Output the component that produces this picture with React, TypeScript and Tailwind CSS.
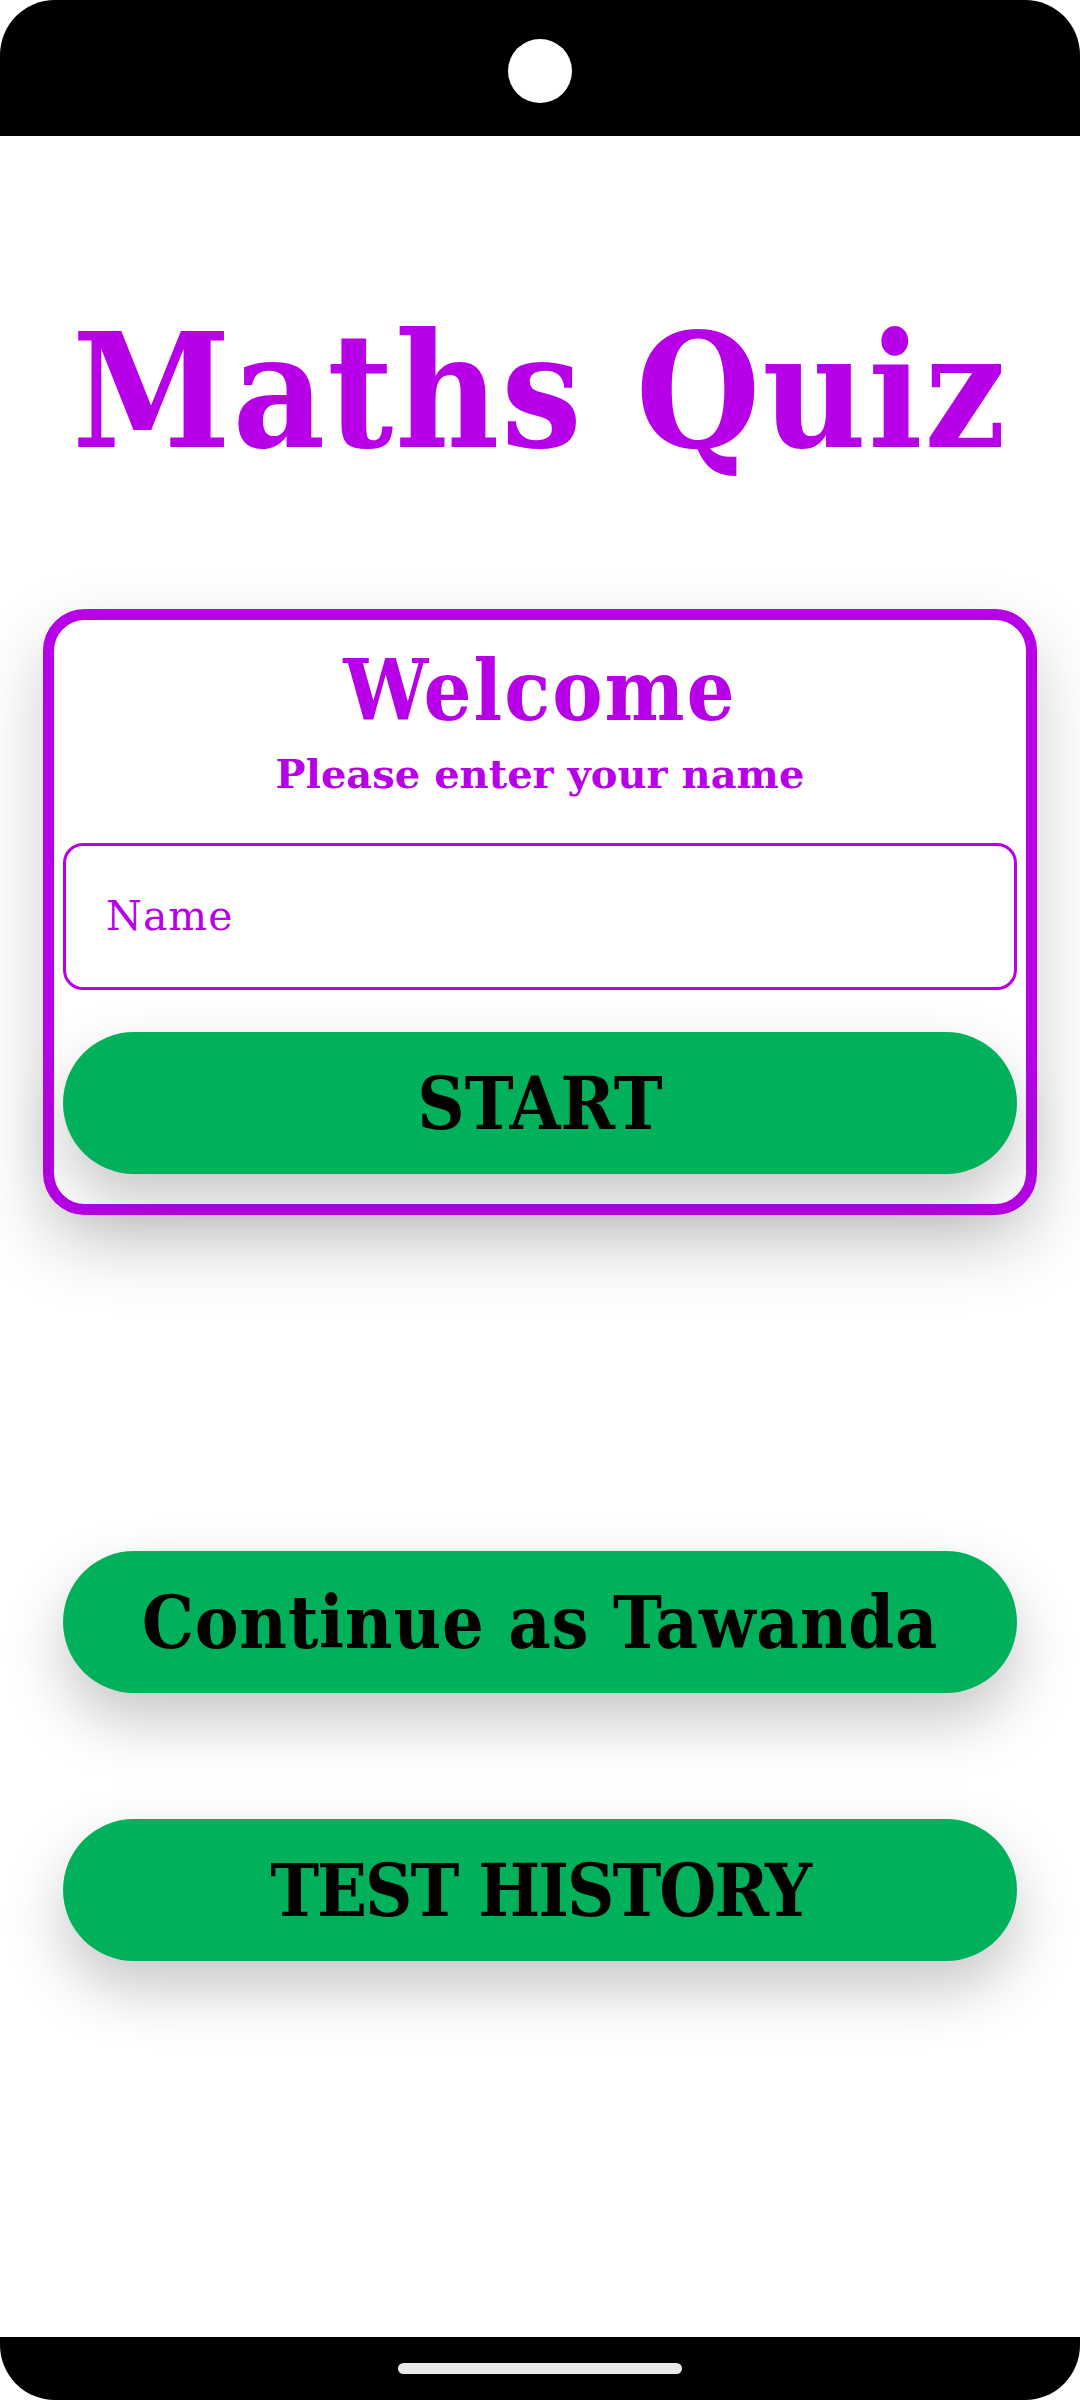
import React from "react";

const serif = "font-['DejaVu_Serif',serif]";

function GreenButton({ label, tracking }: { label: string; tracking: string }) {
    return (
        <button
            className={`w-[954px] h-[142px] rounded-full bg-[#00b05a] text-black text-[73px] leading-none font-bold font-stretch-condensed ${tracking} ${serif} shadow-[0_28px_60px_rgba(0,0,0,0.22)] flex items-center justify-center`}
        >
            {label}
        </button>
    );
}

export default function App() {
    return (
        <div className="w-[1080px] h-[2400px] bg-white flex flex-col">
            {/* status bar with camera */}
            <div className="h-[136px] bg-black rounded-t-[55px] flex justify-center pt-[39px] shrink-0">
                <div className="w-[64px] h-[64px] rounded-full bg-white" />
            </div>

            <div className="flex-1 flex flex-col items-center">
                <h1 className={`mt-[176px] text-[159px] leading-none font-bold font-stretch-condensed tracking-[2px] text-[#b800e8] ${serif}`}>
                    Maths Quiz
                </h1>

                <div className="mt-[138px] w-[994px] border-[11px] border-[#b800e8] rounded-[42px] bg-white px-[9px] pt-[29px] pb-[30px] flex flex-col items-center shadow-[0_30px_70px_rgba(0,0,0,0.2)]">
                    <h2 className={`text-[84px] leading-none font-bold font-stretch-condensed tracking-[2px] text-[#b800e8] ${serif}`}>Welcome</h2>
                    <p className={`mt-[21px] text-[40px] leading-none font-bold text-[#b800e8] ${serif}`}>
                        Please enter your name
                    </p>
                    <div className="mt-[49px] w-full h-[147px] border-[3px] border-[#b800e8] rounded-[20px] flex items-center pl-[40px]">
                        <span className={`text-[41px] leading-none tracking-[1px] text-[#b800e8] ${serif}`}>Name</span>
                    </div>
                    <div className="mt-[42px]">
                        <GreenButton label="START" tracking="tracking-normal" />
                    </div>
                </div>

                <div className="mt-[336px]">
                    <GreenButton label="Continue as Tawanda" tracking="tracking-[0.8px]" />
                </div>
                <div className="mt-[126px]">
                    <GreenButton label="TEST HISTORY" tracking="tracking-[-2px]" />
                </div>
            </div>

            {/* navigation bar */}
            <div className="h-[63px] bg-black rounded-b-[55px] flex justify-center pt-[26px] shrink-0">
                <div className="w-[284px] h-[11px] rounded-full bg-[#e8e8e8]" />
            </div>
        </div>
    );
}
